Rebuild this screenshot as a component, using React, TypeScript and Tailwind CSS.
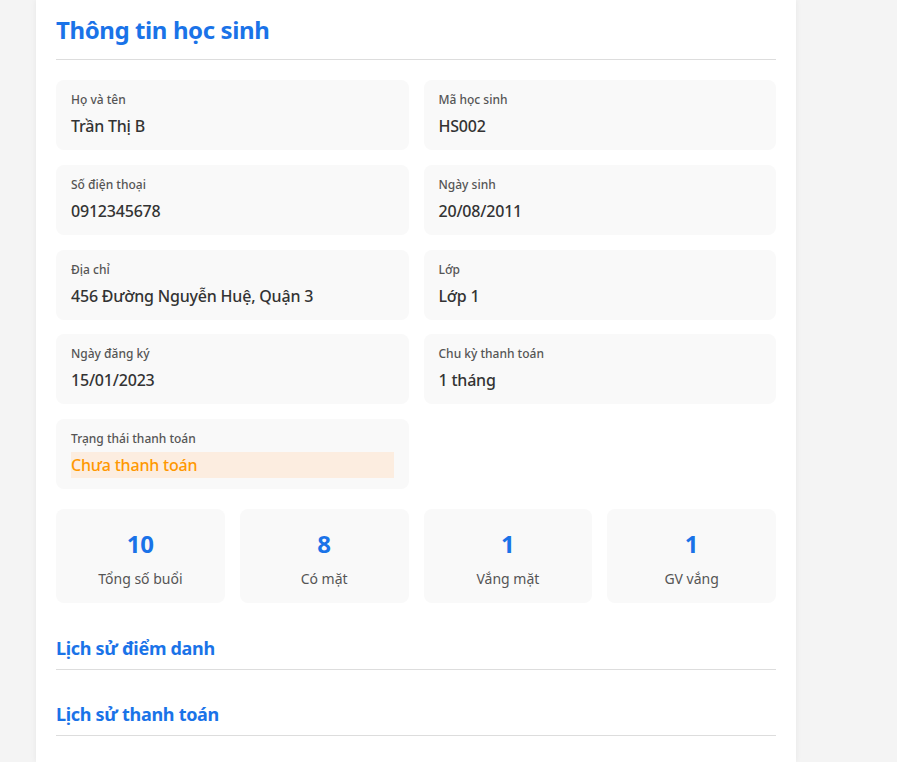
const infoItems = [
  { label: "Họ và tên", value: "Trần Thị B" },
  { label: "Mã học sinh", value: "HS002" },
  { label: "Số điện thoại", value: "0912345678" },
  { label: "Ngày sinh", value: "20/08/2011" },
  { label: "Địa chỉ", value: "456 Đường Nguyễn Huệ, Quận 3" },
  { label: "Lớp", value: "Lớp 1" },
  { label: "Ngày đăng ký", value: "15/01/2023" },
  { label: "Chu kỳ thanh toán", value: "1 tháng" },
];

const stats = [
  { value: "10", label: "Tổng số buổi" },
  { value: "8", label: "Có mặt" },
  { value: "1", label: "Vắng mặt" },
  { value: "1", label: "GV vắng" },
];

function InfoCell({ label, children }: { label: string; children: React.ReactNode }) {
  return (
    <div className="rounded-lg bg-[#f9f9f9] px-[15px] pt-[11px] pb-[10px] h-[70px]">
      <div className="text-[12px] leading-[18px] font-medium text-[#555]">{label}</div>
      <div className="mt-[5px]">{children}</div>
    </div>
  );
}

export default function App() {
  return (
    <div
      className="min-h-[762px] bg-[#f4f4f4] pl-[36px] w-[897px]"
      style={{ fontFamily: '"Noto Sans", "Open Sans", sans-serif' }}
    >
      <div className="w-[760px] min-h-[762px] bg-white px-5 pt-[13px] shadow-[0_0_6px_rgba(0,0,0,0.06)]">
        <h2 className="text-[24px] leading-[34px] font-bold tracking-[-0.4px] text-[#1a73e8] pb-[12px] border-b border-[#ddd]">
          Thông tin học sinh
        </h2>

        <div className="grid grid-cols-2 gap-x-[15px] gap-y-[14.75px] mt-[20px]">
          {infoItems.map((item) => (
            <InfoCell key={item.label} label={item.label}>
              <div className="text-[16px] leading-[24px] font-medium tracking-[-0.2px] text-[#333]">
                {item.value}
              </div>
            </InfoCell>
          ))}
          <InfoCell label="Trạng thái thanh toán">
            <div className="text-[16px] leading-[26px] font-medium tracking-[-0.2px] text-[#ff9800] bg-[#fcede0] -mt-[1px]">
              Chưa thanh toán
            </div>
          </InfoCell>
        </div>

        <div className="grid grid-cols-4 gap-[15px] mt-[20px]">
          {stats.map((s) => (
            <div
              key={s.label}
              className="h-[94px] rounded-lg bg-[#f9f9f9] flex flex-col items-center pt-[19px]"
            >
              <div className="text-[24px] leading-[32px] font-bold text-[#1a73e8]">{s.value}</div>
              <div className="text-[14px] leading-[20px] text-[#555] mt-[9px]">{s.label}</div>
            </div>
          ))}
        </div>

        <h3 className="mt-[32px] text-[18px] leading-[26px] font-bold tracking-[-0.3px] text-[#1a73e8] pb-[8px] border-b border-[#ddd]">
          Lịch sử điểm danh
        </h3>
        <h3 className="mt-[31px] text-[18px] leading-[26px] font-bold tracking-[-0.3px] text-[#1a73e8] pb-[8px] border-b border-[#ddd]">
          Lịch sử thanh toán
        </h3>
      </div>
    </div>
  );
}
